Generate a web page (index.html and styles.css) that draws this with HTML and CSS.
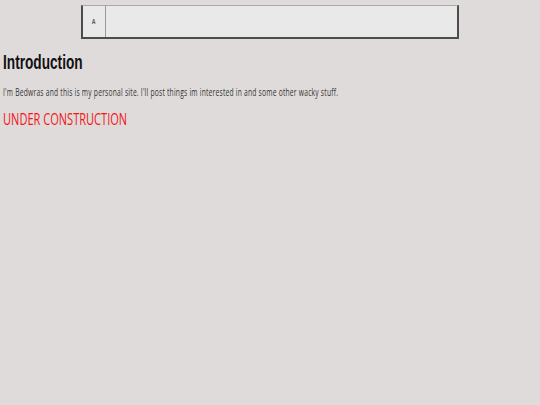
FILE: index.html
```html
<!DOCTYPE html>
<html lang="en">
<head>
<meta charset="utf-8">
<title>Bedwras</title>
<link rel="stylesheet" href="styles.css">
</head>
<body>
<div class="page">
  <nav class="bar">
    <div class="toggle"><span class="toggle-glyph">A</span></div>
    <div class="bar-fill"></div>
  </nav>
  <main class="content">
    <h1 class="title">Introduction</h1>
    <p class="intro">I'm Bedwras and this is my personal site. I'll post things im interested in and some other wacky stuff.</p>
    <h2 class="construction">UNDER CONSTRUCTION</h2>
  </main>
</div>
</body>
</html>
```
FILE: styles.css
```css
html, body {
  margin: 0;
  padding: 0;
  background: #e0dbdb;
  height: 100%;
}

.page {
  width: 540px;
  padding-top: 5px;
  box-sizing: border-box;
}

.bar {
  display: flex;
  width: 378px;
  height: 34px;
  margin: 0 auto;
  box-sizing: border-box;
  background: #e9e9e9;
  border-top: 1px solid #a9a9a9;
  border-left: 2px solid #4d4d4d;
  border-right: 2px solid #4d4d4d;
  border-bottom: 2px solid #4d4d4d;
}

.toggle {
  width: 22px;
  flex: none;
  border-right: 1px solid #9a9a9a;
  display: flex;
  align-items: center;
  justify-content: center;
}

.toggle-glyph {
  font-family: "Liberation Sans", Arial, sans-serif;
  font-size: 7px;
  font-weight: bold;
  color: #555;
  transform: scaleX(0.75);
}

.bar-fill {
  flex: 1;
}

.content {
  padding-left: 3px;
}

.title,
.intro,
.construction {
  transform: scaleX(0.65);
  transform-origin: 0 0;
  width: 520px;
}

.title {
  margin: 10.5px 0 0 0;
  font-family: "Liberation Sans", Arial, sans-serif;
  font-weight: bold;
  font-size: 21px;
  line-height: 24px;
  color: #111;
}

.intro {
  margin: 11.5px 0 0 0;
  font-family: "Open Sans", sans-serif;
  font-size: 10.3px;
  letter-spacing: 0.35px;
  line-height: 14px;
  color: #333;
  white-space: nowrap;
}

.construction {
  margin: 10px 0 0 0;
  font-family: "Open Sans", sans-serif;
  font-weight: 500;
  font-size: 17px;
  line-height: 20px;
  color: #f01818;
}
```
